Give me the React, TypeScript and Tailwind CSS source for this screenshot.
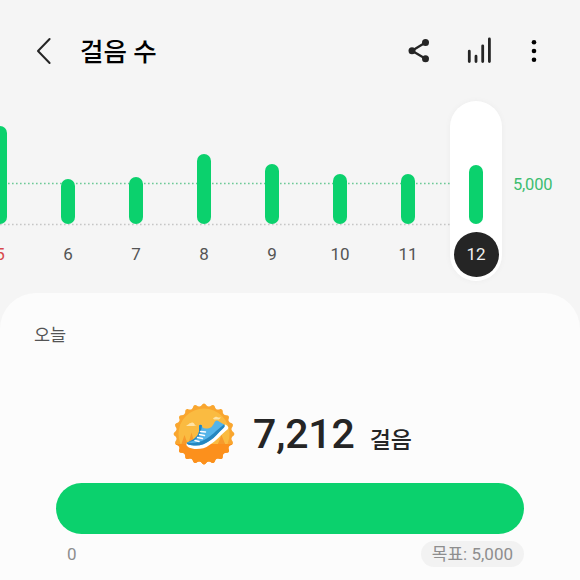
import clsx from 'clsx';

const GREEN = '#0bd16d';

const days = [
  { day: 5, height: 98, holiday: true },
  { day: 6, height: 45 },
  { day: 7, height: 47 },
  { day: 8, height: 70 },
  { day: 9, height: 60 },
  { day: 10, height: 50 },
  { day: 11, height: 50 },
  { day: 12, height: 59, selected: true },
];

export default function App() {
  return (
    <div className="flex h-[580px] w-[580px] flex-col overflow-hidden bg-[#f5f5f5] font-['Roboto','Noto_Sans_CJK_KR',sans-serif]">
      <Header />
      <DailyChart />
      <main className="flex-1 rounded-t-[36px] bg-[#fcfcfc]">
        <p className="pt-[30px] pl-[34px] text-[17.5px] leading-6 text-[#545454]">오늘</p>

        <div className="mt-[54px] flex h-[66px] items-center pl-[172px]">
          <ShoeBadge />
          <p className="ml-[17px] flex items-baseline text-[#252525]">
            <span className="text-[41px] leading-[50px] font-medium tracking-[-0.15px]">7,212</span>
            <span className="ml-[15px] text-[23px] leading-[30px] font-medium">걸음</span>
          </p>
        </div>

        {/* Goal progress */}
        <div className="mx-14 mt-4 h-[51px] rounded-full bg-[#0bd16d]" />
        <div className="mx-14 mt-[7px] flex items-center justify-between text-[17px] leading-[26px] text-[#8e8e8e]">
          <span className="pl-[11px]">0</span>
          <span className="h-[26px] rounded-full bg-[#f2f2f2] px-[11px]">목표: 5,000</span>
        </div>
      </main>
    </div>
  );
}

function Header() {
  return (
    <header className="flex h-[101px] shrink-0 items-center text-[#252525]">
      <svg className="ml-[34px] h-8 w-5" viewBox="0 0 20 32" fill="none" stroke="currentColor" strokeWidth="2" strokeLinecap="round" strokeLinejoin="round">
        <path d="M15.600 4 4 16l11.600 12" />
      </svg>
      <h1 className="ml-[26px] flex-1 pt-0.5 text-[25.5px] leading-8 font-medium text-black">걸음 수</h1>

      <svg className="h-6 w-6" viewBox="0 0 24 24" fill="currentColor">
        <path d="M18.500 3.500 5 11.700l13.500 8.100" fill="none" stroke="currentColor" strokeWidth="2.3" />
        <circle cx="5" cy="11.7" r="3.5" />
        <circle cx="18.5" cy="3.5" r="3.5" />
        <circle cx="18.5" cy="19.8" r="3.5" />
      </svg>
      <svg className="ml-[35px] h-7 w-7" viewBox="0 0 28 28" fill="none" stroke="currentColor" strokeWidth="2.8" strokeLinecap="round">
        <path d="M3.3 14.200v10.300M10 19.200v5.300M16.700 8.800v15.700M23.400 2v22.500" />
      </svg>
      <svg className="mr-[34px] ml-7 h-6 w-6" viewBox="0 0 24 24" fill="#000">
        <circle cx="12" cy="3.2" r="2.3" />
        <circle cx="12" cy="12" r="2.3" />
        <circle cx="12" cy="20.8" r="2.3" />
      </svg>
    </header>
  );
}

function DailyChart() {
  return (
    <section className="relative h-[192px] shrink-0">
      <svg className="absolute inset-x-0 top-0 h-[130px] w-[450px]" viewBox="0 0 450 130" strokeWidth="1.3" strokeDasharray="1.6 2.4">
        <path d="M0 82.5h450" stroke="#6cc996" />
        <path d="M0 123.5h450" stroke="#c6c6c6" />
      </svg>

      <div className="relative -ml-[26px] flex gap-4">
        {days.map(({ day, height, holiday, selected }) => (
          <div
            key={day}
            className={clsx(
              'flex h-[180px] w-[52px] shrink-0 flex-col items-center rounded-full',
              selected && 'bg-white shadow-[0_0_6px_rgba(0,0,0,0.04)]',
            )}
          >
            <div className="flex h-[123px] items-end">
              <div className="w-[14px] rounded-full" style={{ height, backgroundColor: GREEN }} />
            </div>
            <span
              className={clsx(
                'mt-2 flex size-[45px] items-center justify-center rounded-full text-[17px]',
                selected && 'bg-[#252525] text-[#f0f0f0]',
                holiday && 'text-[#d9484b]',
                !selected && !holiday && 'text-[#545454]',
              )}
            >
              {day}
            </span>
          </div>
        ))}
        <span className="-ml-[5px] pt-[72px] text-[16.5px] leading-6 tracking-[-0.2px] text-[#3dbd70]">5,000</span>
      </div>
    </section>
  );
}

// Scalloped rim, one tooth every 18 degrees
const rim = Array.from({ length: 20 }, (_, i) => {
  const at = (deg: number, r: number) => {
    const a = (deg * Math.PI) / 180;
    return `${(32 + r * Math.sin(a)).toFixed(2)} ${(32 - r * Math.cos(a)).toFixed(2)}`;
  };
  const d = i * 18;
  return `${i === 0 ? 'M' : 'L'}${at(d - 3, 29.8)}Q${at(d, 31.2)} ${at(d + 3, 29.8)}Q${at(d + 9, 26)} ${at(d + 15, 29.8)}`;
}).join('') + 'Z';

function ShoeBadge() {
  return (
    <svg className="size-16 shrink-0" viewBox="0 0 64 64">
      <defs>
        <clipPath id="disc">
          <circle cx="32" cy="32" r="25.5" />
        </clipPath>
        <clipPath id="rim">
          <path d={rim} />
        </clipPath>
      </defs>
      <path d={rim} fill="#f9a62f" />
      <g clipPath="url(#disc)">
        <path d="M0 0h64v64H0z" fill="#fabb41" />
        <path d="M14 24c2-1 3-3 5-3 2-1 3 0 4 2h2l-3 1zM41 16.500c2-2 4-2 5-1h3l-2 2h-5z" fill="#fde3a6" />
        <path d="m12.500 33 3.500 10H9zM19.500 30.500l3.500 12.500h-7zM49.500 33l4 10h-8z" fill="#f79a2b" />
      </g>
      <path d="M0 42h64v22H0z" fill="#fc901c" clipPath="url(#rim)" />
      {/* Sneaker */}
      <path d="M14.500 41.500c-1 3 4 5.500 10 5.500 5 0 9-1 13-4 7-4 12-11 18-15.500 2-2 0-4-2-5z" fill="#fff" />
      <path d="M27 23.500c1-1 2-1 3 0 0 2 1 3 4 3 5 0 6-2 8-5 1-3 3-4 5-2l5 3c1 1 1 2-1 4-5 4-8 9-13 12-4 3-9 5-14 5-6 0-10-1-9-3 5-2 11-5 12-11z" fill="#54b4e8" />
      <path d="M15 40.500c6 1 13 0 18-3 6-3 11-9 19-15 1 1 1 2-1 4-5 4-8 9-13 12-4 3-9 5-14 5-6 0-10-1-9-3z" fill="#2586bf" />
      <path d="M27 23.500c1-1 2-1 3 0l-1 5.500c-1 5-4 8-8 10l-6 1.500c5-2 11-5 12-11z" fill="#2586bf" />
      <path d="m28.500 29.500 5 .5M27.500 32.500l5 1M25.500 35.500l5 1M23 38.500l4 1" stroke="#fff" strokeWidth="1.4" strokeLinecap="round" />
    </svg>
  );
}
